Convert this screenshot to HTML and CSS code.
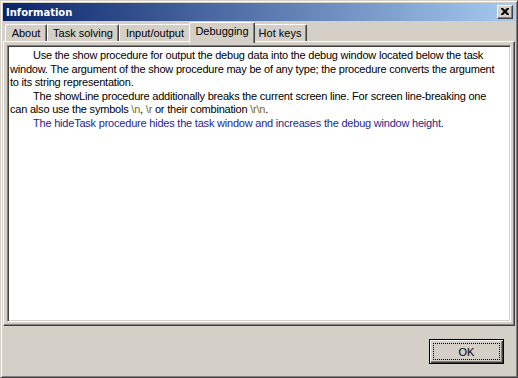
FILE: index.html
```html
<!DOCTYPE html>
<html>
<head>
<meta charset="utf-8">
<link rel="stylesheet" href="styles.css">
</head>
<body>
<div class="window">
  <div class="titlebar">
    <span class="title">Information</span>
    <span class="close"><svg width="8" height="7" viewBox="0 0 8 7"><path d="M0 0h2l2 2 2-2h2v1l-2.5 2.5L8 6v1H6L4 5 2 7H0V6l2.5-2.5L0 1z" fill="#000"/></svg></span>
  </div>
  <div class="tabs">
    <div class="tab w-about">About</div>
    <div class="tab w-task">Task solving</div>
    <div class="tab w-io">Input/output</div>
    <div class="tab active w-debug">Debugging</div>
    <div class="tab w-hot">Hot keys</div>
  </div>
  <div class="panel">
    <div class="memo">
      <div class="line indent">Use the show procedure for output the debug data into the debug window located below the task</div>
      <div class="line">window. The argument of the show procedure may be of any type; the procedure converts the argument</div>
      <div class="line">to its string representation.</div>
      <div class="line indent">The showLine procedure additionally breaks the current screen line. For screen line-breaking one</div>
      <div class="line">can also use the symbols <span class="esc">\n</span>, <span class="esc">\r</span> or their combination <span class="esc">\r\n</span>.</div>
      <div class="line indent blue">The hideTask procedure hides the task window and increases the debug window height.</div>
    </div>
  </div>
  <div class="footer">
    <div class="okbtn"><span class="focus">OK</span></div>
  </div>
</div>
</body>
</html>
```
FILE: styles.css
```css
html, body {
  margin: 0;
  padding: 0;
  background: #d4d0c8;
}
.window {
  width: 518px;
  height: 378px;
  box-sizing: border-box;
  border: 1px solid;
  border-color: #d4d0c8 #404040 #404040 #d4d0c8;
  box-shadow: inset 1px 1px #fff, inset -1px -1px #808080;
  padding: 2px;
  background: #d4d0c8;
  display: flex;
  flex-direction: column;
  font-family: "Liberation Sans", Arial, sans-serif;
  font-size: 11px;
  color: #000;
}
.titlebar {
  height: 18px;
  flex: none;
  background: linear-gradient(to right, #0a246a, #a6caf0);
  display: flex;
  align-items: center;
  justify-content: space-between;
  padding: 0 2px 0 2px;
}
.title {
  color: #fff;
  font-weight: bold;
  font-family: "DejaVu Sans", sans-serif;
  font-size: 10px;
  padding-left: 1px;
}
.close {
  width: 16px;
  height: 14px;
  box-sizing: border-box;
  background: #d4d0c8;
  border: 1px solid;
  border-color: #fff #404040 #404040 #fff;
  box-shadow: inset -1px -1px #808080;
  display: flex;
  align-items: center;
  justify-content: center;
  padding-bottom: 1px;
}
.close svg { display: block; }
.tabs {
  height: 20px;
  flex: none;
  display: flex;
  align-items: flex-end;
  padding-left: 2px;
  position: relative;
  z-index: 2;
}
.tab {
  height: 17px;
  box-sizing: border-box;
  border-top: 1px solid #fff;
  border-left: 1px solid #fff;
  border-right: 1px solid #404040;
  box-shadow: inset -1px 0 #808080;
  border-radius: 2px 2px 0 0;
  display: flex;
  align-items: center;
  justify-content: center;
  padding-bottom: 1px;
  white-space: nowrap;
  background: #d4d0c8;
}
.tab.active {
  height: 21px;
  margin: 0 -2px -2px -2px;
  padding-bottom: 4px;
  position: relative;
  z-index: 3;
}
.w-about { width: 42px; }
.w-task { width: 72px; }
.w-io { width: 72px; }
.w-debug { width: 66px; }
.w-hot { width: 54px; }
.panel {
  height: 285px;
  flex: none;
  box-sizing: border-box;
  border: 1px solid;
  border-color: #fff #404040 #404040 #fff;
  box-shadow: inset -1px -1px #808080;
  padding: 3px;
  display: flex;
}
.memo {
  flex: 1;
  box-sizing: border-box;
  border: 1px solid;
  border-color: #808080 #fff #fff #808080;
  box-shadow: inset 1px 1px #404040, inset -1px -1px #d4d0c8;
  background: #fff;
  padding: 3px 2px 0 2px;
  line-height: 13.6px;
  letter-spacing: -0.21px;
}
.line {
  white-space: nowrap;
}
.indent { padding-left: 23px; }
.esc { color: #7a6a10; }
.blue { color: #26268a; }
.footer {
  flex: 1;
  display: flex;
  justify-content: flex-end;
  align-items: flex-start;
  padding: 13px 11px 0 0;
}
.okbtn {
  width: 75px;
  height: 25px;
  box-sizing: border-box;
  border: 1px solid #000;
  box-shadow: inset 1px 1px #fff, inset -1px -1px #404040, inset -2px -2px #808080;
  padding: 3px;
  display: flex;
}
.focus {
  flex: 1;
  border: 1px dotted #000;
  display: flex;
  align-items: center;
  justify-content: center;
  font-size: 11px;
}
```
